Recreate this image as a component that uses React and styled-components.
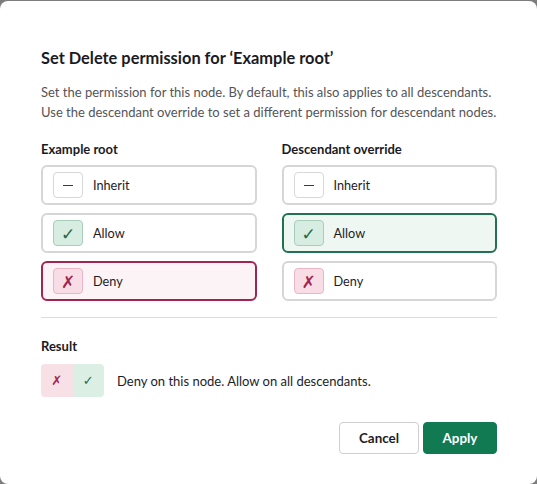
import React from "react";
import styled, { createGlobalStyle } from "styled-components";

const Global = createGlobalStyle`
  html, body { margin: 0; padding: 0; background: #7d7d7d; }
  body { font-family: Lato, "Open Sans", sans-serif; color: #1d1d1f; }
  * { box-sizing: border-box; }
`;

const Dialog = styled.div`
  margin-top: 1px;
  height: 483px;
  background: #fff;
  border-radius: 8px;
  padding: 46px 40px 0 40px;
  display: flex;
  flex-direction: column;
`;

const Title = styled.h2`
  margin: 0 0 0 1px;
  font-size: 16.4px;
  line-height: 22px;
  font-weight: 700;
  color: #1b1b1f;
`;

const Description = styled.p`
  margin: 14px 0 0 1px;
  font-size: 13px;
  line-height: 19.5px;
  color: #545458;
  white-space: nowrap;
`;

const Columns = styled.div`
  margin-top: 19px;
  display: grid;
  grid-template-columns: 1fr 1fr;
  column-gap: 25px;
  padding-left: 1px;
`;

const Column = styled.div`
  display: flex;
  flex-direction: column;
`;

const Label = styled.div`
  font-size: 13px;
  font-weight: 700;
  line-height: 16px;
  color: #1b1b1f;
  margin-bottom: 8px;
`;

const Options = styled.div`
  display: flex;
  flex-direction: column;
  gap: 8px;
`;

const variants = {
  allow: { border: "#217152", bg: "#eff7f3" },
  deny: { border: "#a3244f", bg: "#fbf3f6" },
};

const Option = styled.div`
  height: 40px;
  border: 2px solid ${(p) => (p.$selected ? variants[p.$kind].border : "#d6d6d8")};
  background: ${(p) => (p.$selected ? variants[p.$kind].bg : "#fff")};
  border-radius: 6px;
  display: flex;
  align-items: center;
  padding-left: 10px;
  gap: 10px;
  font-size: 12.7px;
  color: #1d1d1f;
`;

const boxColors = {
  inherit: { bg: "#fff", border: "#d8d8da", color: "#333" },
  allow: { bg: "#d8ede2", border: "#a9cdbb", color: "#1c6a48" },
  deny: { bg: "#f8dde6", border: "#e8b6c6", color: "#a3244f" },
};

const IconBox = styled.span`
  width: 30px;
  height: 26px;
  border-radius: 4px;
  border: 1px solid ${(p) => boxColors[p.$kind].border};
  background: ${(p) => boxColors[p.$kind].bg};
  color: ${(p) => boxColors[p.$kind].color};
  display: flex;
  align-items: center;
  justify-content: center;
  font-family: "DejaVu Sans", sans-serif;
  font-size: 17px;
  line-height: 1;
  padding-top: 2px;
`;

const Dash = styled.span`
  width: 10px;
  height: 1px;
  margin-top: -2px;
  background: #3a3a3e;
`;

const Divider = styled.hr`
  margin: 16px 0 0 1px;
  border: none;
  border-top: 1px solid #dcdcde;
`;

const ResultLabel = styled(Label)`
  margin-top: 20px;
  padding-left: 1px;
  margin-bottom: 10px;
`;

const ResultRow = styled.div`
  display: flex;
  align-items: center;
  gap: 13px;
  padding-left: 1px;
  font-size: 13px;
  color: #1d1d1f;
`;

const Badge = styled.div`
  display: flex;
  width: 63px;
  height: 33px;
  border-radius: 4px;
  overflow: hidden;
`;

const BadgeHalf = styled.span`
  flex: 1;
  display: flex;
  align-items: center;
  justify-content: center;
  background: ${(p) => (p.$kind === "deny" ? "#f8e0e7" : "#dcefe5")};
  color: ${(p) => (p.$kind === "deny" ? "#a3244f" : "#1c6a48")};
  font-family: "DejaVu Sans", sans-serif;
  font-size: 13px;
`;

const Footer = styled.div`
  margin-top: 25px;
  display: flex;
  justify-content: flex-end;
  gap: 4px;
`;

const Button = styled.button`
  height: 32px;
  width: ${(p) => (p.$primary ? "74px" : "80px")};
  padding: 0;
  border-radius: 4px;
  font-family: Lato, sans-serif;
  font-weight: 700;
  font-size: 13.4px;
  border: 1px solid ${(p) => (p.$primary ? "#117a52" : "#cfcfd2")};
  background: ${(p) => (p.$primary ? "#117a52" : "#fff")};
  color: ${(p) => (p.$primary ? "#fff" : "#1d1d1f")};
`;

const OPTIONS = [
  { kind: "inherit", label: "Inherit" },
  { kind: "allow", label: "Allow" },
  { kind: "deny", label: "Deny" },
];

function Glyph({ kind }) {
  if (kind === "inherit") return <Dash />;
  if (kind === "allow") return "✓";
  return "✗";
}

function OptionList({ selected }) {
  return (
    <Options>
      {OPTIONS.map((o) => (
        <Option key={o.kind} $kind={o.kind} $selected={selected === o.kind}>
          <IconBox $kind={o.kind}>
            <Glyph kind={o.kind} />
          </IconBox>
          {o.label}
        </Option>
      ))}
    </Options>
  );
}

export default function App() {
  return (
    <>
      <Global />
      <Dialog>
        <Title>Set Delete permission for ‘Example root’</Title>
        <Description>
          Set the permission for this node. By default, this also applies to all descendants.
          <br />
          Use the descendant override to set a different permission for descendant nodes.
        </Description>
        <Columns>
          <Column>
            <Label>Example root</Label>
            <OptionList selected="deny" />
          </Column>
          <Column>
            <Label>Descendant override</Label>
            <OptionList selected="allow" />
          </Column>
        </Columns>
        <Divider />
        <ResultLabel>Result</ResultLabel>
        <ResultRow>
          <Badge>
            <BadgeHalf $kind="deny">✗</BadgeHalf>
            <BadgeHalf $kind="allow">✓</BadgeHalf>
          </Badge>
          Deny on this node. Allow on all descendants.
        </ResultRow>
        <Footer>
          <Button>Cancel</Button>
          <Button $primary>Apply</Button>
        </Footer>
      </Dialog>
    </>
  );
}
